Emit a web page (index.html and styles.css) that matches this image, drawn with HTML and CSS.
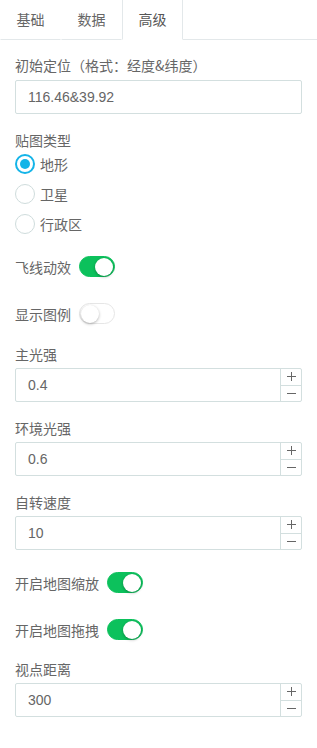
FILE: index.html
```html
<!DOCTYPE html>
<html lang="zh">
<head>
<meta charset="utf-8">
<link rel="stylesheet" href="styles.css">
</head>
<body>
<div class="tabs">
  <div class="tab">基础</div>
  <div class="tab">数据</div>
  <div class="tab tab--active">高级</div>
  <div class="tabs-rest"></div>
</div>
<div class="form">
  <div class="field mt-15">
    <div class="label">初始定位（格式：经度&amp;纬度）</div>
    <div class="input"><span class="input-text">116.46&amp;39.92</span></div>
  </div>

  <div class="radio-field mt-17">
    <div class="label label--tight">贴图类型</div>
    <div class="radio-row"><span class="radio radio--checked"></span><span class="radio-text">地形</span></div>
    <div class="radio-row"><span class="radio"></span><span class="radio-text">卫星</span></div>
    <div class="radio-row"><span class="radio"></span><span class="radio-text">行政区</span></div>
  </div>

  <div class="switch-row mt-17">
    <span class="switch-text">飞线动效</span>
    <span class="switch switch--on"><span class="knob"></span></span>
  </div>
  <div class="switch-row mt-26">
    <span class="switch-text">显示图例</span>
    <span class="switch"><span class="knob"></span></span>
  </div>

  <div class="field mt-20">
    <div class="label">主光强</div>
    <div class="input input--num"><span class="input-text">0.4</span>
      <span class="stepper">
        <span class="step"><svg width="9" height="9" viewBox="0 0 9 9"><path d="M0 4.5H9M4.5 0V9" stroke="#666" stroke-width="1"/></svg></span>
        <span class="step step--down"><svg width="9" height="9" viewBox="0 0 9 9"><path d="M0 4.5H9" stroke="#666" stroke-width="1"/></svg></span>
      </span>
    </div>
  </div>
  <div class="field mt-16">
    <div class="label">环境光强</div>
    <div class="input input--num"><span class="input-text">0.6</span>
      <span class="stepper">
        <span class="step"><svg width="9" height="9" viewBox="0 0 9 9"><path d="M0 4.5H9M4.5 0V9" stroke="#666" stroke-width="1"/></svg></span>
        <span class="step step--down"><svg width="9" height="9" viewBox="0 0 9 9"><path d="M0 4.5H9" stroke="#666" stroke-width="1"/></svg></span>
      </span>
    </div>
  </div>
  <div class="field mt-16">
    <div class="label">自转速度</div>
    <div class="input input--num"><span class="input-text">10</span>
      <span class="stepper">
        <span class="step"><svg width="9" height="9" viewBox="0 0 9 9"><path d="M0 4.5H9M4.5 0V9" stroke="#666" stroke-width="1"/></svg></span>
        <span class="step step--down"><svg width="9" height="9" viewBox="0 0 9 9"><path d="M0 4.5H9" stroke="#666" stroke-width="1"/></svg></span>
      </span>
    </div>
  </div>

  <div class="switch-row mt-22">
    <span class="switch-text">开启地图缩放</span>
    <span class="switch switch--on"><span class="knob"></span></span>
  </div>
  <div class="switch-row mt-26">
    <span class="switch-text">开启地图拖拽</span>
    <span class="switch switch--on"><span class="knob"></span></span>
  </div>

  <div class="field mt-19">
    <div class="label">视点距离</div>
    <div class="input input--num"><span class="input-text">300</span>
      <span class="stepper">
        <span class="step"><svg width="9" height="9" viewBox="0 0 9 9"><path d="M0 4.5H9M4.5 0V9" stroke="#666" stroke-width="1"/></svg></span>
        <span class="step step--down"><svg width="9" height="9" viewBox="0 0 9 9"><path d="M0 4.5H9" stroke="#666" stroke-width="1"/></svg></span>
      </span>
    </div>
  </div>
</div>
</body>
</html>
```
FILE: styles.css
```css
* { box-sizing: border-box; }
html, body { margin: 0; padding: 0; background: #fff; }
body {
  width: 317px;
  font-family: "Noto Sans CJK SC", "Noto Sans", sans-serif;
  font-size: 14px;
  color: #666;
}
.tabs {
  display: flex;
  height: 40px;
}
.tab {
  width: 61px;
  height: 40px;
  line-height: 39px;
  text-align: center;
  color: #666;
  border-bottom: 1px solid #e3e8ea;
  border-left: 1px solid transparent;
  border-right: 1px solid transparent;
}
.tab--active {
  border-left-color: #e3e8ea;
  border-right-color: #e3e8ea;
  border-bottom-color: transparent;
  color: #555;
}
.tabs-rest {
  flex: 1;
  border-bottom: 1px solid #e3e8ea;
}
.form {
  display: flex;
  flex-direction: column;
  padding: 0 15px;
}
.mt-15 { margin-top: 15px; }
.mt-16 { margin-top: 16px; }
.mt-17 { margin-top: 17px; }
.mt-19 { margin-top: 19px; }
.mt-20 { margin-top: 20px; }
.mt-22 { margin-top: 22px; }
.mt-26 { margin-top: 26px; }

.label {
  line-height: 20px;
  height: 20px;
  margin-bottom: 4px;
  color: #666;
  white-space: nowrap;
}
.field:first-child .label { margin-bottom: 5px; }
.label--tight { height: 18px; line-height: 18px; margin-bottom: 0; }

.input {
  height: 34px;
  border: 1px solid #d3dfdf;
  border-radius: 2px;
  display: flex;
  align-items: center;
  padding-left: 12px;
}
.input-text {
  flex: 1;
  color: #666;
  font-family: "Liberation Sans", "Noto Sans", sans-serif;
  font-size: 14px;
}
.input--num { align-items: stretch; }
.input--num .input-text { display: flex; align-items: center; }
.stepper {
  width: 21px;
  border-left: 1px solid #d3dfdf;
  display: flex;
  flex-direction: column;
}
.step {
  flex: 1;
  display: flex;
  align-items: center;
  justify-content: center;
}
.step--down { border-top: 1px solid #d3dfdf; }
.step svg { display: block; }

.radio-row {
  height: 30px;
  display: flex;
  align-items: center;
}
.radio {
  width: 20px;
  height: 20px;
  border-radius: 50%;
  border: 1px solid #cfdcdc;
  display: flex;
  align-items: center;
  justify-content: center;
  margin-right: 5px;
}
.radio--checked { border: 2px solid #14b4e8; }
.radio--checked::after {
  content: "";
  width: 10px;
  height: 10px;
  border-radius: 50%;
  background: #14b4e8;
}
.radio-text { color: #666; line-height: 20px; }

.switch-row {
  height: 21px;
  display: flex;
  align-items: center;
}
.switch-text { line-height: 20px; margin-right: 8px; color: #666; }
.switch {
  width: 36px;
  height: 21px;
  border-radius: 11px;
  background: #fff;
  border: 1px solid #e6e6e6;
  display: flex;
  align-items: center;
  padding: 0 1px;
}
.switch--on {
  background: #0cc15c;
  border-color: #0cc15c;
  justify-content: flex-end;
}
.knob {
  width: 18px;
  height: 18px;
  border-radius: 50%;
  background: #fff;
  box-shadow: 0 1px 3px rgba(0,0,0,0.3);
}
```
